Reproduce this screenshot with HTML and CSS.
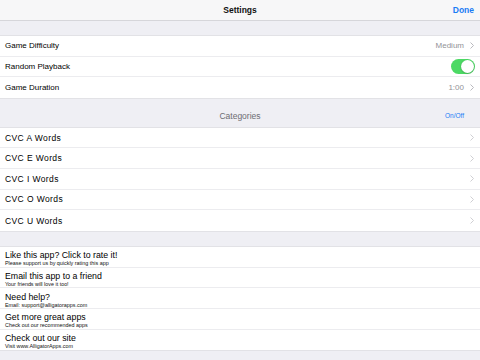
FILE: index.html
```html
<!DOCTYPE html>
<html>

<head>
    <title>Settings</title>
    <link rel="stylesheet" href="styles.css">
</head>

<body>
    <header class="navbar">
        <span class="nav-title">Settings</span>
        <span class="nav-done">Done</span>
    </header>

    <div class="gap gap-top"></div>

    <ul class="group">
        <li class="row">
            <span class="label">Game Difficulty</span>
            <span class="detail">Medium</span>
            <svg class="chev" width="4" height="7" viewBox="0 0 4 7"><polyline points="0.5,0.5 3.5,3.5 0.5,6.5" /></svg>
        </li>
        <li class="row">
            <span class="label">Random Playback</span>
            <span class="toggle"><span class="knob"></span></span>
        </li>
        <li class="row">
            <span class="label">Game Duration</span>
            <span class="detail">1:00</span>
            <svg class="chev" width="4" height="7" viewBox="0 0 4 7"><polyline points="0.5,0.5 3.5,3.5 0.5,6.5" /></svg>
        </li>
    </ul>

    <div class="section-head">
        <span class="section-title">Categories</span>
        <span class="onoff">On/Off</span>
    </div>

    <ul class="group">
        <li class="row cat">
            <span class="label">CVC A Words</span>
            <svg class="chev light" width="4" height="7" viewBox="0 0 4 7"><polyline points="0.5,0.5 3.5,3.5 0.5,6.5" /></svg>
        </li>
        <li class="row cat">
            <span class="label">CVC E Words</span>
            <svg class="chev light" width="4" height="7" viewBox="0 0 4 7"><polyline points="0.5,0.5 3.5,3.5 0.5,6.5" /></svg>
        </li>
        <li class="row cat">
            <span class="label">CVC I Words</span>
            <svg class="chev light" width="4" height="7" viewBox="0 0 4 7"><polyline points="0.5,0.5 3.5,3.5 0.5,6.5" /></svg>
        </li>
        <li class="row cat">
            <span class="label">CVC O Words</span>
            <svg class="chev light" width="4" height="7" viewBox="0 0 4 7"><polyline points="0.5,0.5 3.5,3.5 0.5,6.5" /></svg>
        </li>
        <li class="row cat">
            <span class="label">CVC U Words</span>
            <svg class="chev light" width="4" height="7" viewBox="0 0 4 7"><polyline points="0.5,0.5 3.5,3.5 0.5,6.5" /></svg>
        </li>
    </ul>

    <div class="gap gap-mid"></div>

    <ul class="group links">
        <li class="link">
            <span class="link-title">Like this app? Click to rate it!</span>
            <span class="link-sub">Please support us by quickly rating this app</span>
        </li>
        <li class="link">
            <span class="link-title">Email this app to a friend</span>
            <span class="link-sub">Your friends will love it too!</span>
        </li>
        <li class="link">
            <span class="link-title">Need help?</span>
            <span class="link-sub">Email: support@alligatorapps.com</span>
        </li>
        <li class="link">
            <span class="link-title">Get more great apps</span>
            <span class="link-sub">Check out our recommended apps</span>
        </li>
        <li class="link">
            <span class="link-title">Check out our site</span>
            <span class="link-sub">Visit www.AlligatorApps.com</span>
        </li>
    </ul>
</body>

</html>
```

FILE: styles.css
```css
html,
body {
    margin: 0;
    padding: 0;
    height: 100%;
}

body {
    background: #efeff4;
    font-family: "Liberation Sans", Arial, sans-serif;
    color: #000;
    overflow: hidden;
}

.navbar {
    box-sizing: border-box;
    height: 20.6px;
    background: #f7f7f8;
    border-bottom: 1px solid #d6d6da;
    display: flex;
    align-items: center;
    justify-content: center;
    position: relative;
}

.nav-title {
    font-size: 8.5px;
    font-weight: bold;
    color: #111;
}

.nav-done {
    position: absolute;
    right: 6px;
    top: 5px;
    font-size: 8.5px;
    font-weight: bold;
    color: #1a7cf5;
}

.gap-top {
    height: 14.5px;
}

.gap-mid {
    height: 14px;
}

.group {
    list-style: none;
    margin: 0;
    padding: 0;
    background: #fff;
    border-top: 1px solid #e2e2e6;
    border-bottom: 1px solid #e2e2e6;
}

.row {
    box-sizing: border-box;
    height: 20.6px;
    display: flex;
    align-items: center;
    padding: 0 6px 0 5px;
    border-bottom: 1px solid #ececef;
    font-size: 8px;
}

.row:last-child {
    border-bottom: none;
}

.label {
    flex: 1;
}

.cat .label {
    font-size: 8.5px;
    letter-spacing: 0.4px;
}

.detail {
    color: #929297;
    margin-right: 6px;
}

.chev {
    fill: none;
    stroke: #b9b9be;
    stroke-width: 1;
}

.chev.light {
    stroke: #cfcfd3;
}

.toggle {
    width: 24px;
    height: 15px;
    border-radius: 8px;
    background: #4cd964;
    display: flex;
    justify-content: flex-end;
    align-items: center;
    margin-right: -1px;
}

.knob {
    width: 13px;
    height: 13px;
    margin-right: 1px;
    border-radius: 50%;
    background: #fff;
    box-shadow: 0 0.5px 1.5px rgba(0, 0, 0, 0.3);
}

.section-head {
    box-sizing: border-box;
    height: 28px;
    display: flex;
    align-items: center;
    justify-content: center;
    position: relative;
    padding-top: 7px;
}

.section-title {
    font-size: 8.5px;
    color: #6d6d72;
}

.onoff {
    position: absolute;
    right: 16px;
    top: 13.5px;
    font-size: 6.5px;
    color: #1a7cf5;
}

.link {
    box-sizing: border-box;
    height: 20.7px;
    display: flex;
    flex-direction: column;
    justify-content: center;
    padding: 3px 0 0 5px;
    border-bottom: 1px solid #ececef;
}

.link:last-child {
    border-bottom: none;
}

.link-title {
    font-size: 8.8px;
    line-height: 10px;
}

.link-sub {
    font-size: 5.4px;
    line-height: 6px;
    color: #111;
}
```
